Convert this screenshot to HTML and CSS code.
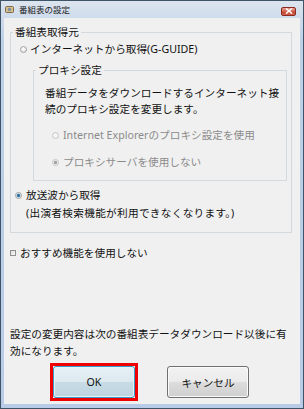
FILE: index.html
```html
<!DOCTYPE html>
<html lang="ja">
<head>
<meta charset="utf-8">
<link rel="stylesheet" href="styles.css">
</head>
<body>
<div class="window">
  <div class="titlebar">
    <svg class="appicon" width="9" height="9" viewBox="0 0 9 9">
      <rect x="0.5" y="1.5" width="8" height="6" rx="1" fill="#d9c08a" stroke="#7d6a4a" stroke-width="1"/>
      <circle cx="4.5" cy="4.5" r="1.8" fill="#7f8fa5"/>
    </svg>
    <span class="title">番組表の設定</span>
    <span class="close">
      <svg width="8" height="6" viewBox="0 0 8 6"><path d="M1 0.5 L7 5.5 M7 0.5 L1 5.5" stroke="#fff" stroke-width="1.6"/></svg>
    </span>
  </div>
  <div class="client">
    <fieldset class="group outer">
      <legend>番組表取得元</legend>
      <div class="opt src1"><span class="radio"></span><span>インターネットから取得(G-GUIDE)</span></div>
      <fieldset class="group inner">
        <legend>プロキシ設定</legend>
        <p class="desc">番組データをダウンロードするインターネット接<br>続のプロキシ設定を変更します。</p>
        <div class="opt dis ie"><span class="radio"></span><span>Internet Explorerのプロキシ設定を使用</span></div>
        <div class="opt dis nop"><span class="radio on"></span><span>プロキシサーバを使用しない</span></div>
      </fieldset>
      <div class="opt bcast"><span class="radio on"></span><span>放送波から取得</span></div>
      <div class="note">(出演者検索機能が利用できなくなります。)</div>
    </fieldset>
    <div class="opt check"><span class="box"></span><span>おすすめ機能を使用しない</span></div>
    <p class="info">設定の変更内容は次の番組表データダウンロード以後に有<br>効になります。</p>
    <div class="buttons">
      <span class="focus"><button class="btn ok">OK</button></span>
      <button class="btn cancel">キャンセル</button>
    </div>
  </div>
</div>
</body>
</html>
```
FILE: styles.css
```css
* { box-sizing: border-box; }
html, body { margin: 0; padding: 0; }
body {
  width: 304px; height: 409px; overflow: hidden;
  font-family: "Noto Sans", "Noto Sans CJK JP", sans-serif;
  font-size: 10.65px;
  color: #111;
}
.window {
  width: 304px; height: 409px;
  border: 1px solid #3d5566;
  background: linear-gradient(#dce4ee, #bdd0e8 40px, #b8cce8);
  padding: 0 3px 4px 3px;
  display: flex; flex-direction: column;
}
.titlebar {
  height: 17px;
  display: flex; align-items: center;
  padding-left: 1px;
}
.appicon { display: block; margin-top: -1px; }
.title {
  font-size: 8.5px; line-height: 10px;
  margin-left: 5px; color: #1a1a1a;
}
.close {
  margin-left: auto; margin-right: 4px; margin-top: 3px;
  width: 15px; height: 9px;
  border: 1px solid #8a2a20; border-radius: 2px;
  background: linear-gradient(#e8a092, #d0604c 50%, #c0402e 51%, #d2644e);
  display: flex; align-items: center; justify-content: center;
}
.close svg { display: block; }
.client {
  flex: 1;
  background: #f0f0f0;
  padding: 0 0 0 6px;
  display: flex; flex-direction: column; align-items: flex-start;
}
.group {
  margin: 0; padding: 0;
  border: 1px solid #d4d9dd;
  min-width: 0;
}
.group legend {
  padding: 0 2px; margin-left: 2px;
  line-height: 16px;
}
.outer { margin-top: 6px; width: 282px; }
.inner { margin: 5px 0 0 22px; width: 254px; }
.opt { display: flex; align-items: center; height: 16px; line-height: 16px; white-space: nowrap; }
.radio {
  width: 7px; height: 7px; border-radius: 50%;
  border: 1px solid #a0a1a1;
  background: radial-gradient(circle at 40% 35%, #ffffff, #dadada);
  flex: none;
}
.radio.on { background: radial-gradient(circle, #2c628b 0, #3d7aa6 1.3px, #e2ecf4 2.2px, #f4f4f4 3px); }
.dis { color: #8b8b8b; }
.dis .radio { border-color: #c6c6c6; background: #f4f4f4; }
.dis .radio.on { background: radial-gradient(circle, #9a9a9a 0, #a8a8a8 1.3px, #efefef 2.2px); }
.src1 { margin: 1px 0 0 9px; gap: 3px; }
.desc { margin: 7px 0 0 11px; line-height: 16px; }
.ie { margin: 10px 0 0 18px; gap: 4px; }
.nop { margin: 11px 0 10px 18px; gap: 4px; }
.bcast { margin: 6px 0 0 4px; gap: 4px; }
.note { margin: 2px 0 11px 15px; line-height: 16px; white-space: nowrap; letter-spacing: 0.3px; }
.check { margin-top: 12px; gap: 4px; }
.box {
  width: 6px; height: 6px; flex: none;
  border: 1px solid #8f8f8f;
  background: linear-gradient(135deg, #dcdcdc, #fbfbfb);
}
.info { margin: 65px 0 0 0; line-height: 17px; white-space: nowrap; }
.buttons { display: flex; align-items: center; gap: 29px; margin: 3px 0 0 40px; }
.focus { display: block; border: 3px solid #ee0000; }
.btn {
  display: block;
  width: 82px; height: 32px; padding: 0;
  font: inherit; color: #111;
  border-radius: 3px;
  border: 1px solid #707070;
  box-shadow: inset 0 0 0 1px #fafafa;
  background: linear-gradient(#f2f2f2, #ebebeb 50%, #dddddd 50%, #cfcfcf);
}
.ok {
  border-color: #3a9bc9;
  box-shadow: inset 0 0 0 1px #e6f4fa;
  background: linear-gradient(#e6f0f5, #dde9ef 50%, #c8dce6 50%, #bdd3df);
}
```
